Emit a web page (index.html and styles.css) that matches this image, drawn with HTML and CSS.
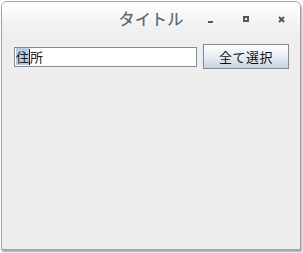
FILE: index.html
```html
<!DOCTYPE html>
<html lang="ja">
<head>
  <meta charset="UTF-8" />
  <title>タイトル</title>
  <link rel="stylesheet" href="styles.css">
</head>
<body>
  <div class="window">
    <div class="titlebar">
      <div class="title">タイトル</div>
      <div class="controls">
        <span class="ctl ctl-min"></span>
        <span class="ctl ctl-max"></span>
        <span class="ctl ctl-close">
          <svg width="7" height="7" viewBox="0 0 7 7"><path d="M1 1L6 6M6 1L1 6" stroke="#4b5a66" stroke-width="2"/></svg>
        </span>
      </div>
    </div>

    <div class="content">
      <div class="field"><span class="sel">住</span><span class="caret"></span>所</div>
      <button class="btn">全て選択</button>
    </div>
  </div>
</body>
</html>
```

FILE: styles.css
```css
/* Reset */
*, *::before, *::after {
  box-sizing: border-box;
  margin: 0;
  padding: 0;
  font-family: 'Noto Sans CJK JP', 'DejaVu Sans', sans-serif;
}

body {
  background-color: #fff;
  width: 303px;
  height: 253px;
  padding: 1px 0 0 1px;
}

/* Ventana */
.window {
  width: 300px;
  height: 249px;
  border: 1px solid #a2a2a2;
  border-radius: 6px 6px 0 0;
  background-color: #eeeeee;
  box-shadow: 1px 2px 2px rgba(0, 0, 0, 0.35);
  overflow: hidden;
}

.titlebar {
  height: 34px;
  background: linear-gradient(#ffffff, #f3f3f3 60%, #eeeeee);
  display: flex;
  align-items: center;
  position: relative;
}

.title {
  width: 100%;
  text-align: center;
  font-size: 16px;
  color: #56636e;
  letter-spacing: 0.3px;
  margin-top: -2px;
  -webkit-text-stroke: 0.2px #56636e;
}

.controls {
  position: absolute;
  right: 2px;
  top: 0;
  height: 100%;
  display: flex;
  align-items: center;
}

.ctl {
  width: 36px;
  height: 12px;
  display: flex;
  justify-content: center;
  align-items: center;
}

.ctl-min::after {
  content: "";
  width: 5px;
  height: 2px;
  margin-top: 6px;
  background-color: #4b5a66;
}

.ctl-max::after {
  content: "";
  width: 6px;
  height: 6px;
  border: 2px solid #4b5a66;
}

.ctl-close {
  width: 34px;
  padding-left: 1px;
}

/* Contenido */
.content {
  display: flex;
  align-items: center;
  padding: 8px 0 0 12px;
}

.field {
  width: 183px;
  height: 20px;
  background-color: #fff;
  border: 1px solid #7e8d9b;
  font-size: 13px;
  line-height: 18px;
  color: #222;
  display: flex;
  align-items: center;
  padding-left: 1px;
}

.sel {
  background-color: #b6cde3;
  height: 17px;
  line-height: 17px;
}

.caret {
  width: 1px;
  height: 16px;
  background-color: #222;
}

.btn {
  margin-left: 6px;
  width: 86px;
  height: 25px;
  border: 1px solid #7c8c9c;
  background: linear-gradient(#fdfdfe, #e8eef5 50%, #c5d4e3);
  font-size: 13px;
  color: #111;
  letter-spacing: 0.5px;
}
```
